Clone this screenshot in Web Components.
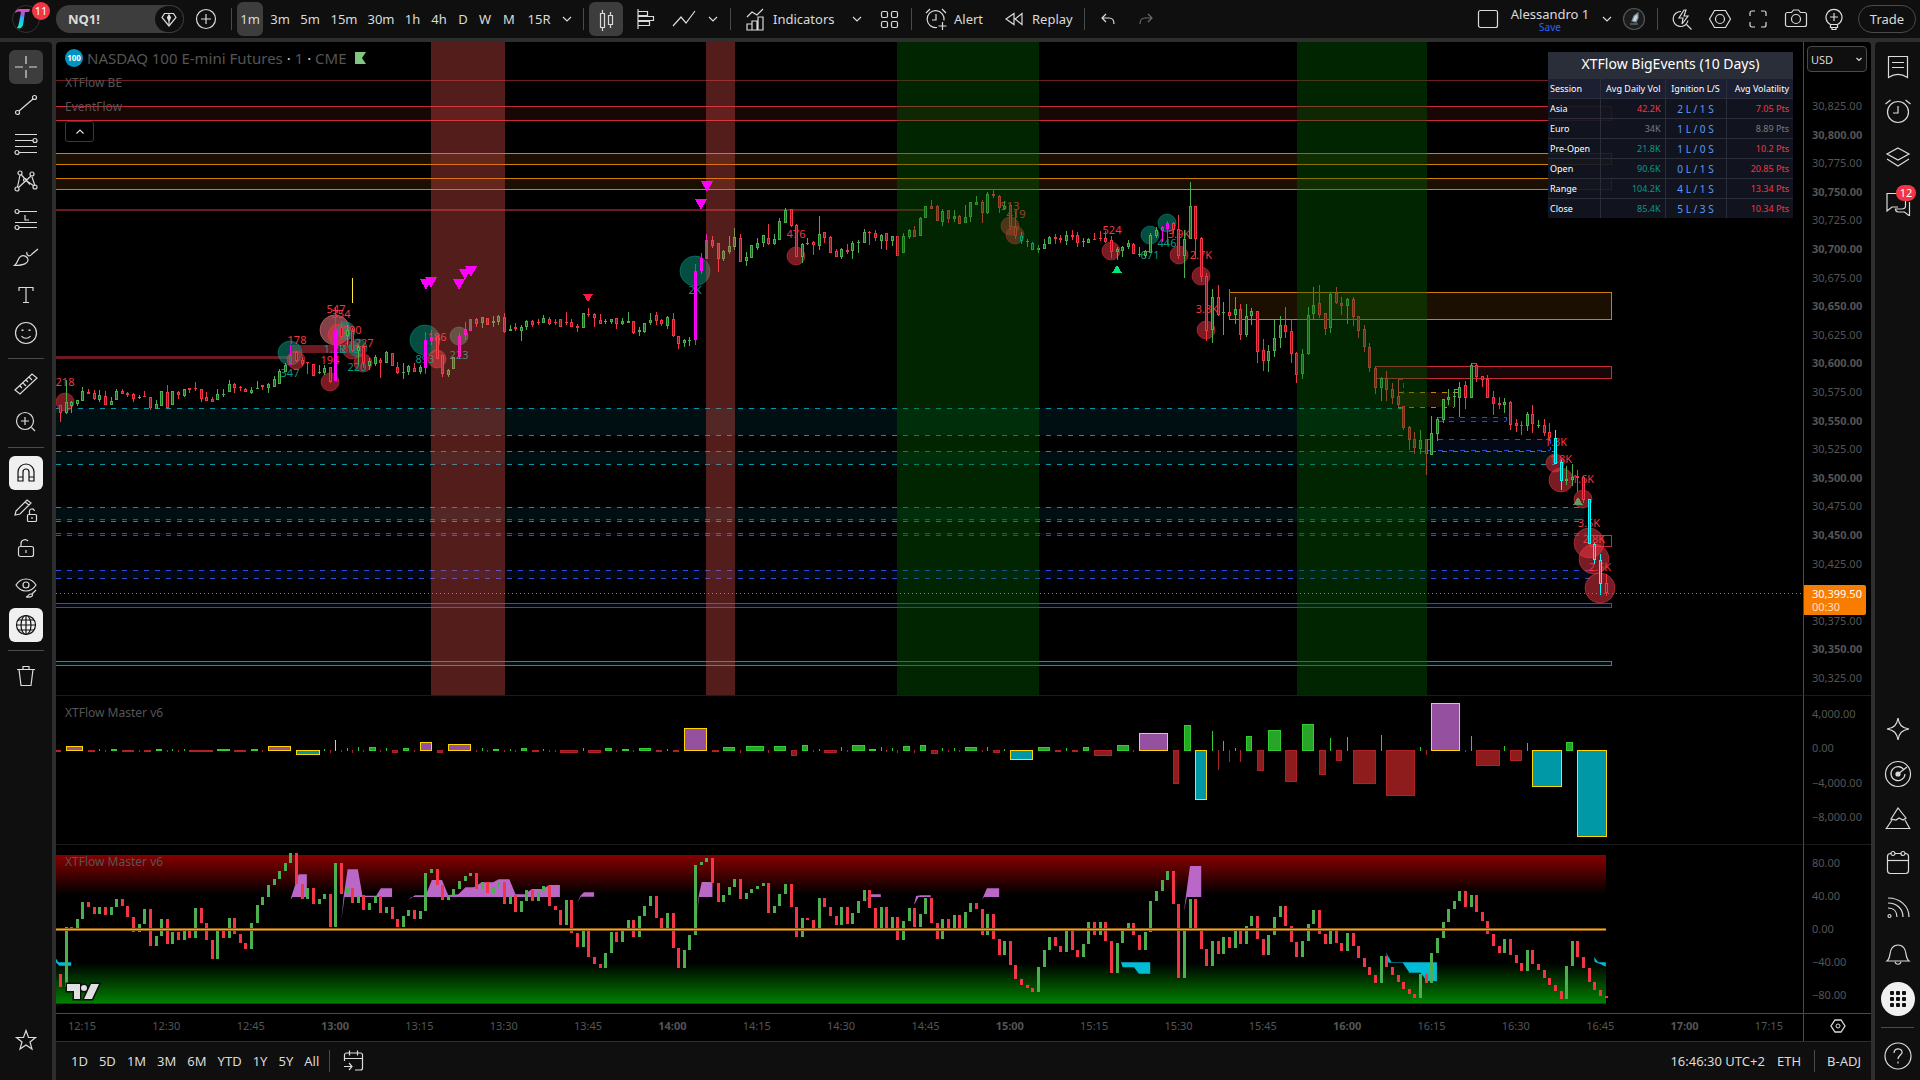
<!DOCTYPE html>
<html lang="en">
<head>
<meta charset="utf-8">
<title>NQ1! chart</title>
<style>
html,body{margin:0;height:100%;background:#2e2e2e;overflow:hidden}
body{font-family:"Noto Sans","Liberation Sans",sans-serif;font-size:13px;line-height:16px;color:#dbdbdb}
</style>
</head>
<body>
<trading-app></trading-app>
<script>
const ICONS={
plus:'<circle cx="14" cy="14" r="9.500"/><path d="M14 9v10M9 14h10"/>',
gem:'<path d="M9.500 8.500h9l2.500 4-7 8.500-7-8.500z"/><path d="M14 10l1.500 2.500L14 16l-1.500-3.500zM14 16v5" fill="currentColor"/>',
chev:'<path d="M10 12l4 4 4-4"/>',
caret:'<path d="M11.500 13l2.500 2.500 2.500-2.500"/>',
candles:'<path d="M8.500 8.500h4v14h-4zM10.500 8V5M10.500 23v3M16.500 10.500h4v9h-4zM18.500 10V7M18.500 20v3"/>',
hbars:'<path d="M7 4v20M7.500 6.500h9v4h-9M7.500 11.500h15v4h-15M7.500 16.500h11v4h-11"/>',
line:'<path d="M3 21l8-9 5 6 9-12"/>',
indic:'<path d="M6 12l5-5 5 3 6-6"/><path d="M6 25v-6h5v6zM11 25v-9h5v9zM17 25V12h5v13z"/>',
grid:'<rect x="6.500" y="6.500" width="6" height="6" rx="1.500"/><rect x="16.500" y="6.500" width="6" height="6" rx="1.500"/><rect x="6.500" y="16.500" width="6" height="6" rx="1.500"/><rect x="16.500" y="16.500" width="6" height="6" rx="1.500"/>',
alert:'<path d="M15 22.500a8.500 8.500 0 1 1 7-7M14 9v6h-4M4 8l4-4M24 8l-4-4M20.500 17v8M16.500 21h8"/>',
replay:'<path d="M14 8.500l-8 5.500 8 5.500zM22 8.500L15 14l7 5.500z"/>',
undo:'<path d="M12 9l-4 4 4 4M8 13h7c3 0 5 2 5 6"/>',
redo:'<path d="M16 9l4 4-4 4M20 13h-7c-3 0-5 2-5 6"/>',
square:'<rect x="4.500" y="5.500" width="19" height="17" rx="2"/>',
boltsearch:'<path d="M13 6.500a7.500 7.500 0 1 0 7 9M18.500 19.500l5 5M16 5l-5 8h4l-1 6 6-8h-4l2-6z"/>',
hex:'<path d="M8.500 5.500h11l5 8.500-5 8.500h-11L3.500 14z"/><circle cx="14" cy="14" r="4.500"/>',
full:'<path d="M6 11V8a2 2 0 0 1 2-2h3M17 6h3a2 2 0 0 1 2 2v3M22 17v3a2 2 0 0 1-2 2h-3M11 22H8a2 2 0 0 1-2-2v-3"/>',
camera:'<path d="M5.500 7.500h4l2-2.500h5l2 2.500h4a2 2 0 0 1 2 2v10a2 2 0 0 1-2 2h-17a2 2 0 0 1-2-2v-10a2 2 0 0 1 2-2z"/><circle cx="14" cy="14" r="4.500"/>',
bulb:'<path d="M10.500 19.500a8 8 0 1 1 7 0zM10.500 19.500v3h7v-3M12 22.500v2h4v-2M14 8v8M10 12h8"/>',
cross:'<path d="M3 14h8M17 14h8M14 3v8M14 17v8"/>',
trend:'<path d="M7 20L21 8"/><circle cx="5.500" cy="21.500" r="2"/><circle cx="22.500" cy="6.500" r="2"/>',
fib:'<path d="M3 5.500h22M3 11.500h18M3 17.500h22M7 23.500h18"/><circle cx="23" cy="11.500" r="2"/><circle cx="5" cy="23.500" r="2"/>',
pattern:'<path d="M5.500 20L8 8M9.500 8l8.500 9.500M6.500 20.500L19 9M20 10l3 9M13.500 13L22 19"/><circle cx="8" cy="6" r="2"/><circle cx="20" cy="7" r="2"/><circle cx="5" cy="22" r="2"/><circle cx="23" cy="20" r="2"/><circle cx="13" cy="13" r="1.500"/>',
position:'<path d="M7 6.500h18M3 17.500h22M7 22.500h18M13 10v5h4"/><circle cx="5" cy="6.500" r="2"/><circle cx="5" cy="22.500" r="2"/>',
brush:'<path d="M2.500 22.500c4-3 3-7 6-9s7 0 7.500 3-3 6-13.500 6zM15 9c-1 4 3 5 5 2l6-5"/>',
text:'<path d="M7 10V6.500h14V10M14 6.500v15M11 21.500h6"/>',
smile:'<circle cx="14" cy="14" r="10.500"/><path d="M9.500 17c2 3 7 3 9 0"/><path d="M10.500 10.500v1.500M17.500 10.500v1.500" stroke-width="2"/>',
ruler:'<path d="M3 20L20 4l5 4L8 24zM8 16l2 2M11 13l3 3M14 10l2 2M17 7l3 3"/>',
zoom:'<circle cx="13" cy="13" r="8.500"/><path d="M13 9v8M9 13h8M19.500 19.500L23 23"/>',
magnet:'<path d="M6 22V13a8 8 0 0 1 16 0v9h-5v-9a3 3 0 0 0-6 0v9zM6 18h5M17 18h5"/>',
pencil:'<path d="M4 14L15 3l4 3L8 17l-5 1zM13 5l4 3"/><rect x="15.500" y="17.500" width="9" height="7" rx="1"/><path d="M17.500 17v-2a2.500 2.500 0 0 1 5-1M20 20v2"/>',
lock:'<rect x="6.500" y="11.500" width="15" height="10" rx="2"/><path d="M9 11V9a4 4 0 0 1 7-3M14 15v3"/>',
eye:'<path d="M4 12c5-8 15-8 20 0-5 8-15 8-20 0z"/><circle cx="14" cy="12" r="3"/><path d="M14 24c3-1 2-3 5-3s2 4-5 3zM20 21l4-4"/>',
globe:'<circle cx="14" cy="14" r="9.500"/><ellipse cx="14" cy="14" rx="5" ry="9.500"/><path d="M4 14h20M14 4.500v19M6 9h16M6 19h16"/>',
trash:'<path d="M5 7.500h18M7 7.500l2 16h10l2-16M11 7V4.500h6V7"/>',
star:'<path d="M14 4.500l2.500 7h7l-5.500 4.500 2 7L14 19l-6 4 2-7-5.500-4.500h7z"/>',
list:'<path d="M4.500 3.500h19v21c-6-4-13-4-19 0zM8 9.500h12M8 14.500h12"/>',
alarm:'<circle cx="14" cy="14" r="10.500"/><path d="M14 8v7H9M1.500 6l5-4M26.500 6l-5-4"/>',
layers:'<path d="M14 5l11 6-11 6-11-6zM3 16l11 7 11-7"/>',
chat:'<path d="M22 10V5.500H3V23l5-4h6M25.500 14v14l-5-4h-6c-2 0-3-1-3-3h6c2 0 4-1 4-3v-5"/>',
spark:'<path d="M14 3c1 7 4 10 11 11-7 1-10 4-11 11-1-7-4-10-11-11 7-1 10-4 11-11z"/>',
radar:'<circle cx="14" cy="14" r="12.500"/><path d="M20 10a7 7 0 1 0 1 4"/><circle cx="14" cy="14" r="2" fill="currentColor"/><path d="M14 14l9-7"/>',
mount:'<path d="M7 14l7-11 8 10-3 2-4-2-3 2zM2 24l6-9M26 24l-5-9M1.500 23.500h25"/>',
cal:'<rect x="3.500" y="3.500" width="21" height="20" rx="3"/><path d="M3.500 10.500h21"/><circle cx="9" cy="3.500" r="2" fill="#0f0f0f"/><circle cx="19" cy="3.500" r="2" fill="#0f0f0f"/>',
rss:'<path d="M4 3c12 0 21 8 21 19M4 8c9 0 15 6 15 14M4 13c6 0 9 4 9 9"/><circle cx="5.500" cy="21" r="1.500"/>',
bell:'<path d="M3 21c4-3 2-9 5-13 3-4 9-4 12 0 3 4 1 10 5 13zM11 22c1 3 5 3 6 0"/>',
dots:'<g fill="#0f0f0f" stroke="none"><rect x="6" y="6" width="4" height="4" rx="1"/><rect x="12" y="6" width="4" height="4" rx="1"/><rect x="18" y="6" width="4" height="4" rx="1"/><rect x="6" y="12" width="4" height="4" rx="1"/><rect x="12" y="12" width="4" height="4" rx="1"/><rect x="18" y="12" width="4" height="4" rx="1"/><rect x="6" y="18" width="4" height="4" rx="1"/><rect x="12" y="18" width="4" height="4" rx="1"/><rect x="18" y="18" width="4" height="4" rx="1"/></g>',
help:'<circle cx="14" cy="14" r="13"/><path d="M10 11c0-6 9-5 8 0-1 2-4 3-4 6M14 19.500v2"/>',
goto:'<path d="M5.500 14V8a2 2 0 0 1 2-2h14a2 2 0 0 1 2 2v13a2 2 0 0 1-2 2H16M5.500 11.500h18M10.500 3.500v5M18.500 3.500v5M5 19.500h8M10 16l3 3.500-3 3.500"/>',
flask:'<circle cx="14" cy="14" r="10.500" stroke="#555" fill="#1c1c1c"/><path d="M12 16l2-5 4-3v5l-2 4zM10 19h8" stroke="#6f8a98" fill="#c7d6de"/>',
up:'<path d="M10.500 15.500L14 12l3.500 3.500"/>'
};
class TvIcon extends HTMLElement{
  connectedCallback(){
    this.attachShadow({mode:'open'}).innerHTML=`<style>:host{display:block;width:28px;height:28px;flex:none}svg{display:block;fill:none;stroke:currentColor;stroke-width:1.2}</style><svg width="28" height="28" viewBox="0 0 28 28" aria-hidden="true">${ICONS[this.getAttribute('name')]||''}</svg>`;
  }
}
customElements.define('tv-icon',TvIcon);

class TvDivider extends HTMLElement{
  connectedCallback(){
    this.attachShadow({mode:'open'}).innerHTML='<style>:host{display:block;flex:none;width:11px;height:22px;background:linear-gradient(#4a4a4a,#4a4a4a) 5px 0/1px 100% no-repeat}</style>';
  }
}
customElements.define('tv-divider',TvDivider);

class TopBar extends HTMLElement{
  connectedCallback(){
    const iv=[['3m',30],['5m',30],['15m',38],['30m',36],['1h',27],['4h',26],['D',22],['W',22],['M',26],['15R',34]];
    this.attachShadow({mode:'open'}).innerHTML=`<style>
:host{display:flex;align-items:center;height:38px;background:#0f0f0f;padding-right:4px;box-sizing:border-box;font-size:13px}
button{font:inherit;color:inherit;background:none;border:0;padding:0;height:34px;display:flex;align-items:center;justify-content:center;flex:none;border-radius:6px;white-space:nowrap}
.on{background:#3d3d3d}
.logo{width:56px;position:relative}
.logo svg{display:block;margin-right:4px}
.badge{position:absolute;left:32px;top:0;width:18px;height:18px;border-radius:9px;background:#f23645;color:#fff;font-size:11px;line-height:18px;text-align:center}
.sym{width:128px;height:28px;border-radius:14px;background:#3d3d3d;justify-content:space-between;padding:0 1px 0 12px;font-weight:700;margin-right:2px}
.sym span{display:flex;align-items:center;width:28px;height:26px;border-radius:13px;background:#0f0f0f}
.lab{justify-content:flex-start;gap:4px;padding-left:5px}
.dim{color:#6a6a6a}
.right{margin-left:auto;display:flex;align-items:center}
.name{flex-direction:column;width:96px}
.name b{font-weight:400;line-height:16px}
.name small{font-size:10px;line-height:10px;color:#2962ff}
.trade{width:58px;height:28px;border:1px solid #4a4a4a;border-radius:14px;margin-left:5px}
</style>
<button class="logo" aria-label="Menu"><svg width="28" height="28" viewBox="0 0 28 28"><defs><linearGradient id="g" x1="0" y1="0" x2="0" y2="1"><stop offset="0" stop-color="#ff3fb4"/><stop offset=".3" stop-color="#7a6cf0"/><stop offset=".55" stop-color="#12c8f0"/><stop offset="1" stop-color="#27e0c8"/></linearGradient></defs><circle cx="14" cy="14" r="13.500" fill="none" stroke="#333"/><path d="M3 8c1-3 2-4 5-4h10l-1 3h-4l-2 13c-1 3-3 4-6 3 2-3 2-6 4-16-3-1-4 0-6 1z" fill="url(#g)"/></svg><span class="badge">11</span></button>
<button class="sym">NQ1!<span><tv-icon name="gem"></tv-icon></span></button>
<button style="width:40px" aria-label="Compare"><tv-icon name="plus"></tv-icon></button>
<tv-divider></tv-divider>
<button class="on" style="width:26px;margin-right:2px">1m</button>
${iv.map(([t,w])=>`<button style="width:${w}px">${t}</button>`).join('')}
<button style="width:22px" aria-label="Intervals"><tv-icon name="chev"></tv-icon></button>
<tv-divider></tv-divider>
<button class="on" style="width:34px" aria-label="Candles"><tv-icon name="candles"></tv-icon></button>
<button style="width:44px" aria-label="Profile"><tv-icon name="hbars"></tv-icon></button>
<button style="width:34px" aria-label="Line"><tv-icon name="line"></tv-icon></button>
<button style="width:24px" aria-label="Styles"><tv-icon name="chev"></tv-icon></button>
<tv-divider></tv-divider>
<button class="lab" style="width:106px"><tv-icon name="indic"></tv-icon>Indicators</button>
<button style="width:30px" aria-label="Favorites"><tv-icon name="chev"></tv-icon></button>
<button style="width:34px" aria-label="Layouts"><tv-icon name="grid"></tv-icon></button>
<tv-divider></tv-divider>
<button class="lab" style="width:78px"><tv-icon name="alert"></tv-icon>Alert</button>
<button class="lab" style="width:84px"><tv-icon name="replay"></tv-icon>Replay</button>
<tv-divider></tv-divider>
<button style="width:36px" aria-label="Undo"><tv-icon name="undo"></tv-icon></button>
<button class="dim" style="width:40px" aria-label="Redo"><tv-icon name="redo"></tv-icon></button>
<div class="right">
<button style="width:28px" aria-label="Layout"><tv-icon name="square"></tv-icon></button>
<button class="name"><b>Alessandro 1</b><small>Save</small></button>
<button style="width:18px" aria-label="Manage layouts"><tv-icon name="chev"></tv-icon></button>
<button style="width:36px" aria-label="Profile picture"><tv-icon name="flask"></tv-icon></button>
<tv-divider></tv-divider>
${['boltsearch','hex','full','camera','bulb'].map(n=>`<button style="width:38px" aria-label="${n}"><tv-icon name="${n}"></tv-icon></button>`).join('')}
<button class="trade">Trade</button>
</div>`;
  }
}
customElements.define('top-bar',TopBar);

class DrawBar extends HTMLElement{
  connectedCallback(){
    const b=(n,c='')=>`<button class="${c}" aria-label="${n}"><tv-icon name="${n}"></tv-icon></button>`;
    this.attachShadow({mode:'open'}).innerHTML=`<style>
:host{display:flex;flex-direction:column;align-items:center;gap:4px;width:52px;background:#0f0f0f;padding:8px 0 23px;box-sizing:border-box;border-radius:0 4px 0 0}
button{width:34px;height:34px;padding:3px;border:0;border-radius:6px;background:none;color:#dbdbdb;flex:none}
.on{background:#3d3d3d}.inv{background:#f0f0f0;color:#0f0f0f}
hr{width:36px;height:1px;border:0;margin:4px 0 4px;background:#4a4a4a;flex:none}
.last{margin-top:auto}
</style>${b('cross','on')}${['trend','fib','pattern','position','brush','text','smile'].map(n=>b(n)).join('')}<hr>${b('ruler')}${b('zoom')}<hr>${b('magnet','inv')}${b('pencil')}${b('lock')}${b('eye')}${b('globe','inv')}<hr>${b('trash')}${b('star','last')}`;
  }
}
customElements.define('draw-bar',DrawBar);

class SideBar extends HTMLElement{
  connectedCallback(){
    const b=(n,c='',x='')=>`<button class="${c}" aria-label="${n}"><tv-icon name="${n}"></tv-icon>${x}</button>`;
    this.attachShadow({mode:'open'}).innerHTML=`<style>
:host{display:flex;flex-direction:column;align-items:center;width:45px;background:#0f0f0f;padding:2px 0;box-sizing:border-box;border-radius:4px 0 0 0}
button{width:45px;height:45px;padding:0;border:0;background:none;color:#dbdbdb;flex:none;display:flex;align-items:center;justify-content:center;position:relative}
.badge{position:absolute;left:21px;top:6px;width:20px;height:16px;border-radius:8px;background:#f23645;color:#fff;font:11px/16px "Noto Sans",sans-serif}
.sp{margin-top:auto}
.inv tv-icon{background:#f0f0f0;border-radius:50%;padding:3px}
hr{width:33px;height:1px;border:0;background:#4a4a4a;margin:6px 0 5px;flex:none}
</style>${b('list')}${b('alarm')}${b('layers')}${b('chat','','<span class="badge">12</span>')}${b('spark','sp')}${['radar','mount','cal','rss','bell'].map(n=>b(n)).join('')}${b('dots','inv')}<hr>${b('help')}`;
  }
}
customElements.define('side-bar',SideBar);

/* Shared time scale: one bar per minute from 12:11 */
const X=i=>Math.round(4+5.62*i);
const rect=(x,y,w,h,f,e='')=>`<rect x="${x}" y="${y}" width="${w}" height="${h}" fill="${f}" ${e}/>`;
const COL={r:'#f23645',g:'#4caf50',m:'#ff00ff',c:'#00ffff',t:'#00c8b4'};
const DIM={r:'#8c1d28',g:'#1c6a24',m:'#4a6a5c',c:'#b03a4a',t:'#00443c'};

/* Each candle: colour, high, body top, body bottom, low (thirds of a pixel from the block's base) */
const CANDLES=[[188,0,`r525,525,548,575 g450,516,548,552 g512,516,528,548 g510,510,522,528 g471,484,512,512 r477,486,492,492 r480,489,507,510 g480,495,510,516 r484,498,524,524 g501,513,524,524 g477,483,509,509 r477,483,492,492 r486,488,494,502 r490,492,507,515 g495,500,502,508 r483,498,500,500 r501,501,534,540 g510,522,536,538 g484,484,527,527 r465,486,533,533 g483,484,524,524 r483,486,494,507 g477,478,498,501 r475,474,479,490 r456,474,477,483 r477,478,508,515 r486,501,513,513 r500,507,515,515 g477,492,509,509 g477,493,496,502 g450,462,487,487 r459,463,474,488 r468,472,475,482 r474,477,486,486 g471,480,488,491 g453,473,475,478 r465,465,472,479 g460,462,475,488 g438,447,470,470 g417,423,462,462 g400,405,427,427 m345,375,402,405 r363,366,392,396 r380,390,402,408 r395,396,400,432 r402,402,437,437 g405,425,428,432 g405,414,428,434 r411,411,456,459 m230,300,452,452 r272,290,322,330 g285,300,318,345 r295,303,362,366 g345,350,362,402 r345,350,400,415 g384,393,408,420 g375,381,403,408 r384,390,400,444 g363,366,398,398 r369,370,409,409 r395,411,430,432 g399,426,429,446 g405,408,426,435 r400,414,425,425 g405,412,426,432 m306,330,414,432 m300,322,334,345 r315,318,386,386 r375,376,432,440 g417,420,434,440 g381,381,418,418 m309,318,381,384 m276,297,316,330 m267,267,302,302 r264,267,282,290 g262,262,279,294 r264,265,285,285 g258,272,280,290 g255,259,276,284 r249,261,305,308 g285,298,304,304 r279,291,298,302 g285,290,302,333 g270,274,290,300 r270,273,284,292 r267,275,278,284 g255,265,278,278 r260,268,282,285 r267,275,278,284 r267,267,290,290 r246,275,280,285 r266,275,290,290 r282,289,294,306 g249,249,293,293 r234,251,254,262`],
[118,95,`r459,462,475,501 r462,480,491,491 g477,482,486,492 g477,477,486,491 r474,474,491,507 g474,483,492,495 g456,483,488,488 r483,484,519,522 g501,509,516,528 g489,489,516,519 g459,480,490,496 r456,466,484,495 r477,480,493,498 g468,472,498,507 r459,477,528,531 r528,529,552,567 g537,541,548,560 g531,540,543,558 m312,333,540,555 m279,295,334,342 m222,240,296,296 r228,240,258,264 r249,249,296,336 g270,273,296,302 g228,258,276,282 g204,231,261,270 r222,234,305,305 g276,291,304,318 g255,255,293,293 g234,249,263,270 g225,226,248,262 r192,234,251,255 g222,237,251,255 g174,183,239,239 g144,150,188,188 r147,148,198,201 r192,195,290,290 g249,252,291,308 g234,250,253,255 r243,245,256,285 g168,222,257,270 r216,217,234,249 r228,231,278,278 r267,273,290,290 g264,267,290,297 r252,269,275,282 g243,249,272,297 g240,245,249,279 g207,216,249,249 r213,216,219,255 r210,219,234,243 g222,225,242,266 r219,220,242,270 g228,229,242,258 r228,228,288,288 g219,228,278,278 g207,210,230,237 r198,210,230,230 g171,174,229,229 g138,139,173,173 r120,138,146,146 r135,139,182,182 g147,153,185,198 r150,150,176,188 g150,168,177,186 r165,168,191,191 g135,171,189,189 g126,126,171,186 g108,126,134,134 r120,127,158,189 g96,102,159,162 r88,102,107,114 r105,108,143,160 g123,137,146,150 r132,134,200,210 r156,200,227,236 t216,228,242,252 t237,243,247,262 t246,248,270,270 g255,265,271,279 g237,252,266,266 g228,231,252,252 r222,231,236,252 r225,234,240,249 g213,225,242,255 r210,224,230,240 r216,225,248,260 g234,243,246,261 g234,237,248,248 r219,236,240,240 r213,233,237,243`],
[128,186,`r183,204,215,220 r198,210,245,264 g231,237,246,270 g228,231,242,262 g210,219,231,237 r219,222,252,252 g231,252,255,262 g240,243,258,264 g189,195,249,249 g171,181,198,204 m168,171,184,216 m153,159,176,225 r156,158,181,192 r135,178,258,266 g180,207,257,324 g36,109,206,206 r108,109,206,264 r200,205,320,335 r309,318,482,512 g357,381,480,519 r345,381,434,438 g396,426,430,495 r357,426,437,447 g381,417,434,462 r402,417,494,510 g402,438,494,501 g414,423,438,465 r423,424,545,579 r507,540,572,602 g525,543,572,605 g447,504,542,560 g438,465,503,533 r411,465,485,503 r447,483,551,579 r546,549,614,639 g537,552,612,627 g411,435,551,555 g351,405,431,447 r345,399,434,443 r430,430,476,495 g366,372,474,489 r351,369,399,402 r381,399,407,435 g384,387,407,462 r381,387,441,468 r438,439,482,503 r465,477,530,546 r519,531,593,606 r588,594,653,672 g621,624,653,693 r603,625,659,693 r639,657,683,702 r627,679,705,711 r708,709,774,780 r768,771,809,840 r786,807,833,852 g780,810,836,852 r807,808,851,915 g738,789,854,854 g741,747,792,813 g687,688,749,759 g657,681,690,705 g657,679,682,711 g636,651,683,741 r633,645,683,717 g579,585,683,683 r582,585,621,636 r618,619,629,651 r615,627,683,683 r663,681,701,735 r681,700,706,717 g684,697,704,728 r693,696,765,780 r747,760,767,786 r753,765,768,795 g726,732,767,783 r705,732,762,789 g750,765,768,774 r747,765,789,798 r759,786,803,813 c780,804,881,881 c870,877,932,960 g888,928,932,945 g882,920,930,948 r900,918,923,966 r918,920,990,1000 c987,988,1123,1123 c1119,1122,1171,1182 c1152,1171,1243,1275 r1212,1240,1270,1278`]];

class PricePlot extends HTMLElement{
  connectedCallback(){
    let s='';
    const end=1556;
    const R='#c92a36',O='#d08000',B='#2650d0',C='#0098ac';
    const line=(x1,x2,y,c,d='')=>`<path d="M${x1} ${y+.5}H${x2}" stroke="${c}" fill="none" ${d?`stroke-dasharray="${d}"`:''}/>`;
    const box=(x1,y1,x2,y2,c,f)=>`<rect x="${x1+.5}" y="${y1+.5}" width="${x2-x1-1}" height="${y2-y1}" fill="${f}" stroke="${c}"/>`;
    const band=(x1,y1,x2,y2,c,f)=>rect(x1,y1,x2-x1,y2-y1,f)+line(x1,x2,y1,c,'5 6')+line(x1,x2,y2,c,'5 6');
    const fr='rgba(242,54,69,.1)',fo='rgba(255,152,0,.1)',fc='rgba(0,188,212,.08)',fb='rgba(41,98,255,.08)';
    s+=line(0,end,38,'#701c24');
    s+=box(-5,64,end,78,R,fr)+box(-5,111,end,122,O,fo)+box(-5,136,end,147,O,fo);
    s+=rect(0,167,870,2,'#6a1a20')+rect(0,314,234,3,'#6a1a20')+rect(234,303,58,8,'#6a1a20');
    s+=band(0,366,1347,393,C,fc)+band(0,409,1499,422,C,fc)+band(0,465,1528,479,C,fc);
    s+=band(0,477,1528,479,B,'none')+band(0,491,1530,493,B,fb)+band(0,528,1538,536,B,fb);
    s+=line(0,1528,479,C,'5 6');
    s+=box(-5,561,end,565,B,fb)+box(-5,619,end,623,C,fc);
    s+=box(1173,250,end,277,O,fo)+box(1319,324,end,336,R,fr)+box(1534,493,end,504,R,'none');
    s+=rect(1342,350,56,15,fo)+line(1342,1410,350,O,'5 6')+line(1342,1398,365,O,'5 6');
    s+=band(1382,375,1450,379,B,fb)+band(1371,397,1494,408,B,fb);
    s+=`<path d="M1398.500 352V365" stroke="${O}" stroke-dasharray="5 3" fill="none"/><path d="M1398 347.500h6" stroke="${O}"/><path d="M1342 337.500h5V352M1450.500 375v4M1494.500 397v11" stroke="${B}" stroke-dasharray="5 3" fill="none"/>`;
    s+=line(1415,1421,321,C);
    const rc='rgba(242,54,69,.5)',tc='rgba(8,153,129,.5)';
    const circ=[[9,360,9,rc],[234,311,12,tc],[240,318,9,rc],[279,288,15,'rgba(225,110,120,.58)'],[283,293,11,rc],[290,289,9,tc],[296,308,9,rc],[302,306,9,tc],[307,321,9,rc],[274,340,9,rc],[369,298,15,tc],[381,317,9,rc],[403,294,9,'rgba(60,130,110,.6)'],[639,229,15,tc],[740,214,9,rc],[954,184,9,rc],[959,193,9,rc],[1055,209,9,rc],[1094,193,9,tc],[1111,181,9,tc],[1123,213,9,rc],[1145,234,9,rc],[1150,288,9,rc],[1499,421,9,rc],[1505,438,12,rc],[1527,457,9,rc],[1533,501,15,rc],[1538,517,15,rc],[1544,546,15,rc]];
    for(const [x,y,r,c] of circ)s+=`<circle cx="${x}" cy="${y}" r="${r}" fill="${c}" stroke="${c}" shape-rendering="auto"/>`;
    const lab=[['218',9,340,0],['178',241,298,0],['347',234,331,1],['547',280,267,0],['354',285,272,0],['290',296,288,0],['227',308,301,0],['194',274,318,0],['220',301,325,1],['1.2K',279,307,1],['218',294,307,1],['893',369,317,1],['186',381,295,0],['223',403,313,1],['2K',639,248,1],['476',740,192,0],['513',954,164,0],['419',960,172,0],['524',1056,188,0],['671',1094,213,1],['446',1111,201,1],['3.9K',1123,192,0],['2.7K',1145,213,0],['3.3K',1151,267,0],['1.3K',1500,400,0],['1.8K',1505,417,0],['1.6K',1527,437,0],['3.5K',1533,481,0],['2.8K',1538,497,0],['2.5K',1544,525,0]];
    for(const [t,x,y,k] of lab)s+=`<text x="${x}" y="${y+4}" text-anchor="middle" fill="${k?'#089981':'#f23645'}">${t}</text>`;
    for(const [base,start,data] of CANDLES){
      data.split(' ').forEach((d,k)=>{
        const c=d[0],v=d.slice(1).split(',').map(n=>Math.round(base+n/3)),x=X(start+k);
        const h=Math.max(1,v[2]-v[1]);
        s+=rect(x,v[0],1,Math.max(1,v[3]-v[0]),COL[c])+rect(x-1,v[1],3,h,COL[c]);
        if(h>2)s+=rect(x,v[1]+1,1,h-2,DIM[c]);
      });
    }
    s+=rect(296,236,1,25,'#ffeb3b');
    const red='rgba(247,88,80,.333)',grn='rgba(0,100,0,.37)';
    s+=rect(375,0,74,'100%',red)+rect(650,0,29,'100%',red)+rect(841,0,142,'100%',grn)+rect(1241,0,130,'100%',grn);
    const tri=(x,y,w,h,c)=>`<path d="M${x-w} ${y}h${2*w}l${-w} ${h}z" fill="${c}"/>`;
    for(const [x,y] of [[370,237],[375,235],[403,237],[409,227],[415,224],[651,139],[645,157]])s+=tri(x,y,6,11,'#ff00ff');
    s+=tri(532,252,5,8,'#ff1744')+tri(1061,231,5,-8,'#00e676')+tri(1522,463,5,-8,'rgba(90,210,120,.7)');
    s+=`<path d="M0 551.500H4000" stroke="#d8731a" stroke-dasharray="1 3"/>`;
    this.attachShadow({mode:'open'}).innerHTML=`<style>:host{display:block;overflow:hidden;min-width:0;position:relative}svg{display:block;position:absolute;inset:0;width:100%;height:100%;font-size:11px}</style><svg shape-rendering="crispEdges">${s}</svg><slot></slot>`;
  }
}
customElements.define('price-plot',PricePlot);

/* kind, first bar, last bar, height above zero (thirds of a pixel) */
const FLOW=`R-1,0,-1 P1,4,13 R5,6,-1 G7,7,4 R8,8,-1 G9,10,4 R11,13,-1 R14,14,-1 R15,16,-4 G17,18,4 R19,19,-1 G20,20,4 R21,21,-1 G22,22,4 R23,27,-4 G28,30,4 R31,33,-1 G34,35,4 R36,36,-1 P37,41,13 C42,46,-13 G47,47,4 R48,48,-5 Y49,49,29 R50,50,-4 G51,51,7 R52,52,-7 G53,53,10 R54,54,-4 G55,56,10 R57,57,-1 G58,58,7 R59,60,-7 G61,62,7 R63,63,-1 P64,66,24 R67,68,-7 P69,73,18 R74,74,-1 G75,75,7 R76,76,-1 G77,78,4 R79,79,-1 G80,80,4 R81,81,-2 G82,83,7 R84,85,-2 G86,86,4 R87,87,-1 R88,88,-2 R89,92,-7 G93,93,7 R94,96,-7 G97,98,7 R99,99,-1 G100,101,4 R102,102,-1 G103,105,7 R106,107,-1 G108,108,4 R109,110,-4 P111,115,66 R116,117,-4 G118,120,10 R121,121,-7 G122,125,13 R126,126,-7 G127,129,13 R130,131,-16 G132,133,16 R134,134,-1 G135,135,4 R136,138,-7 G139,139,10 R140,140,-1 G141,143,16 G144,145,2 G146,146,10 R147,147,-1 G148,148,7 R149,149,-7 G150,151,13 R152,152,-7 G153,154,16 R155,156,-10 G157,157,7 R158,158,-1 G159,159,5 R160,160,-4 G161,163,10 R164,164,-1 G165,165,10 R166,167,-7 G168,168,4 C169,173,-28 G174,176,10 R177,178,-1 G179,179,7 R180,181,-4 G182,183,10 R184,187,-16 G188,190,16 R191,191,-4 P192,197,52 R198,199,-100 G200,201,76 C202,204,-148 G205,205,58 R206,206,-58 G207,207,26 R208,208,-34 G209,209,7 R210,210,-34 G211,212,43 R213,214,-61 G215,217,61 R218,220,-94 G221,223,79 R224,225,-73 G226,226,37 R227,228,-31 G229,229,40 R230,234,-100 G235,235,46 R236,241,-136 G242,242,10 R243,243,-13 P244,249,142 R250,250,-4 G251,251,43 R252,256,-46 G257,257,13 R258,260,-31 G261,261,22 C262,267,-109 G268,269,25 C270,275,-259`;
class FlowPlot extends HTMLElement{
  connectedCallback(){
    const st={R:['#b22222','#8e1c1c'],G:['#32cd32','#28a428'],P:['#ffd600','#9650a0'],C:['#ffd600','#0097a7'],Y:['#ffd600','#ffd600']};
    let s='';
    for(const t of FLOW.split(' ')){
      const [a,b,h]=t.slice(1).split(',').map(Number),[k,f]=st[t[0]];
      const x=X(a),w=X(b)-x+1,hh=Math.max(1,Math.round(Math.abs(h)/3)),y=h>0?54-hh:54;
      s+=rect(x,y,w,hh+1,k);
      if(w>2&&hh>1)s+=rect(x+1,y+1,w-2,hh-1,f);
    }
    this.attachShadow({mode:'open'}).innerHTML=`<style>:host{display:block;overflow:hidden;min-width:0;position:relative}svg{display:block;position:absolute;inset:0;width:100%;height:100%}</style><svg shape-rendering="crispEdges">${s}</svg><slot></slot>`;
  }
}
customElements.define('flow-plot',FlowPlot);

/* Closing level of each oscillator bar; a bar spans from the level before it */
const OSC=[882,921,741,745,717,666,682,702,681,705,681,657,679,711,756,732,687,798,768,717,792,756,780,748,774,684,729,780,837,753,774,714,762,789,807,729,675,651,615,597,573,549,519,612,657,624,672,657,642,741,549,642,624,669,645,690,669,648,699,681,717,741,708,690,717,693,579,567,615,660,645,627,603,588,579,627,606,639,621,606,672,645,696,663,630,663,636,618,678,690,735,660,759,801,748,831,852,864,819,756,786,748,720,771,708,678,648,714,744,699,804,864,810,765,555,546,534,609,666,645,621,597,657,639,627,618,609,699,678,642,612,681,771,714,720,750,654,681,708,735,681,732,699,663,630,684,745,681,744,711,780,723,684,741,702,654,729,777,717,747,705,744,696,669,687,765,702,777,825,783,855,897,915,924,936,861,810,771,798,816,750,810,831,792,726,765,726,783,879,789,753,729,765,810,756,663,633,600,573,672,894,748,657,750,807,858,783,822,771,804,753,792,738,708,777,825,765,711,678,738,786,831,783,732,690,762,792,753,789,813,759,798,834,861,885,909,828,861,885,906,927,942,954,882,909,819,774,726,687,663,633,681,645,696,723,762,798,819,777,825,849,873,810,852,870,894,915,933,957,858,783,831,864,906,930,948,954];
class OscPlot extends HTMLElement{
  connectedCallback(){
    let s='<defs><linearGradient id="r" x1="0" y1="0" x2="0" y2="1"><stop offset="0" stop-color="#860000"/><stop offset="1" stop-color="#000"/></linearGradient><linearGradient id="g" x1="0" y1="0" x2="0" y2="1"><stop offset="0" stop-color="#000"/><stop offset="1" stop-color="#008200"/></linearGradient></defs>';
    s+=rect(0,10,1550,40,'url(#r)')+rect(0,118,1550,41,'url(#g)')+rect(0,158,1550,1,'#005000');
    const poly=(d,c)=>`<path shape-rendering="auto" d="${d}" fill="${c}"/>`,P='#ba68c8',C='#00bcd4';
    s+='<g transform="translate(-16 -165) scale(.5102 .3333)">'
      +poly('M491 660L493 648 507 583H523V651H495zM591 717L595 650 603 568H623L632 647H659L668 625H690V651H597zM722 660L735 646H756L768 600H788L800 645 820 643 834 622H850L866 607H888L899 598H920L932 643H950L964 627H985L998 615H1019V651H728zM1053 670L1059 648 1066 637H1086V650H1060zM1287 710L1291 648 1297 606H1318V651H1292z',P)
      +poly('M31 835L36 847H61V857H38L31 847z',C)+'</g>';
    s+='<g transform="translate(784 -165) scale(.5102 .3333)">'
      +poly('M47 672L58 643H80V651H56zM145 675L149 648 158 646H178V651H154zM278 660L288 625H312V651H282zM674 695L678 648 686 558H708V651H680z',P)
      +poly('M547 830L551 847H608V881H586L576 862H554zM1070 817L1081 847H1170V903H1150L1138 878H1116L1103 848H1075zM1478 831L1486 847H1501V860L1490 852 1479 846z',C)+'</g>';
    for(let i=1;i<OSC.length;i++){
      const a=OSC[i-1],b=OSC[i],y1=Math.round(Math.min(a,b)/3-165),y2=Math.round(Math.max(a,b)/3-165);
      s+=rect(X(i-1)-1,y1,3,Math.max(2,y2-y1),b<a?'#4caf50':'#f23645');
    }
    s+=rect(0,83,1550,3,'#8a5a10')+rect(0,84,1550,1,'#e0ae35');
    this.attachShadow({mode:'open'}).innerHTML=`<style>:host{display:block;overflow:hidden;min-width:0;position:relative}svg{display:block;position:absolute;inset:0;width:100%;height:100%}</style><svg shape-rendering="crispEdges">${s}</svg><slot></slot>`;
  }
}
customElements.define('osc-plot',OscPlot);

class SessionTable extends HTMLElement{
  connectedCallback(){
    const rows=[['Asia','42.2K','r','2 L / 1 S','7.05 Pts','r'],['Euro','34K','n','1 L / 0 S','8.89 Pts','n'],['Pre-Open','21.8K','g','1 L / 0 S','10.2 Pts','r'],['Open','90.6K','g','0 L / 1 S','20.85 Pts','r'],['Range','104.2K','g','4 L / 1 S','13.34 Pts','r'],['Close','85.4K','g','5 L / 3 S','10.34 Pts','r']];
    this.attachShadow({mode:'open'}).innerHTML=`<style>
:host{display:block;width:245px}
table{border-collapse:collapse;table-layout:fixed;width:100%;font-size:9px;line-height:12px;color:#fff}
caption{background:#2a2e39;font-size:14px;line-height:18px;padding:3px 0 5px}
th,td{height:19px;padding:0 4px;font-weight:400;text-align:right;border:solid #2a2e39;border-width:1px 0 0 1px;background:rgba(19,22,34,.9);white-space:nowrap}
thead th{background:#1c1f31;color:#fff}
th:first-child{text-align:left;padding:0 2px;border-left:0}
td:nth-child(3),thead th:nth-child(3){text-align:center;padding:0}
.b{color:#5b9cf6;font-size:10px}.r{color:#f23645}.g{color:#089981}.n{color:#787b86}
</style><table><caption>XTFlow BigEvents (10 Days)</caption><colgroup><col style="width:52px"><col style="width:65px"><col style="width:61px"><col></colgroup><thead><tr><th scope="col">Session</th><th scope="col">Avg Daily Vol</th><th scope="col">Ignition L/S</th><th scope="col">Avg Volatility</th></tr></thead><tbody>${rows.map(r=>`<tr><th scope="row">${r[0]}</th><td class="${r[2]}">${r[1]}</td><td class="b">${r[3]}</td><td class="${r[5]}">${r[4]}</td></tr>`).join('')}</tbody></table>`;
  }
}
customElements.define('session-table',SessionTable);

class ScaleColumn extends HTMLElement{
  connectedCallback(){
    const l=this.getAttribute('labels').split(' ');
    this.attachShadow({mode:'open'}).innerHTML=`<style>
:host{display:flex;flex-direction:column;justify-content:space-between;border-left:1px solid #4a4a4a;box-sizing:border-box;padding-left:8px;color:#555;font-size:11px;line-height:12px;position:relative}
span{height:12px}b{height:12px}
</style>${l.map(t=>t==='-'?'<span></span>':t[0]==='*'?`<b>${t.slice(1)}</b>`:`<span>${t.replace(/^-/,'−')}</span>`).join('')}<slot></slot>`;
  }
}
customElements.define('scale-column',ScaleColumn);

class TimeAxis extends HTMLElement{
  connectedCallback(){
    let s='';
    for(let k=0;k<21;k++){
      const m=12*60+15+15*k,t=Math.floor(m/60)+':'+String(m%60).padStart(2,'0');
      s+=m%60?`<span>${t}</span>`:`<b>${t}</b>`;
    }
    this.attachShadow({mode:'open'}).innerHTML=`<style>:host{display:flex;justify-content:space-between;align-items:center;padding:0 14px 3px 6px;box-sizing:border-box;color:#555;font-size:11px;border-top:1px solid #4a4a4a;min-width:0}span,b{width:40px;text-align:center}</style>${s}`;
  }
}
customElements.define('time-axis',TimeAxis);

class ChartArea extends HTMLElement{
  connectedCallback(){
    const p=[];
    for(let v=30825;v>=30325;v-=25)p.push(v===30400?'-':(v%50?'':'*')+v.toLocaleString('en-US')+'.00');
    this.attachShadow({mode:'open'}).innerHTML=`<style>
:host{display:grid;grid-template:minmax(0,1fr) 149px 168px 28px / minmax(0,1fr) 68px;background:#000;min-width:0;min-height:0;border-radius:4px 4px 0 0;overflow:hidden}
.p{border-bottom:1px solid #1c1c1c}
.legend{position:absolute;left:9px;top:7px;display:flex;flex-direction:column;align-items:flex-start;color:#555;font-size:12px}
.title{display:flex;align-items:center;gap:4px;height:18px;font-size:15px;line-height:18px;margin-bottom:8px}
.title i{width:18px;height:18px;border-radius:9px;background:#0094c4;color:#fff;font:700 8px/18px "Noto Sans",sans-serif;text-align:center}
.title em{font-style:normal;color:#dbdbdb}
.title svg{margin-left:4px}
.legend span{display:block;height:16px;margin-bottom:8px}
.legend span+span{margin-bottom:6px}
.legend button{width:29px;height:21px;padding:0;border:1px solid #3a3a3a;border-radius:3px;background:#000;color:#dbdbdb;display:flex;align-items:center;justify-content:center}
.sub{position:absolute;left:9px;top:9px;color:#555;font-size:12px}
session-table{position:absolute;right:10px;top:10px}
.tv{position:absolute;left:9px;bottom:11px}
.s1{padding-top:58px;padding-bottom:11px}
.s2{padding-top:12px;padding-bottom:21px}
.s3{padding-top:12px;padding-bottom:12px}
.cur{position:absolute;left:3px;top:4px;height:26px}
select{display:block;width:60px;height:26px;box-sizing:border-box;border:1px solid #4a4a4a;border-radius:4px;color:#dbdbdb;font:11px "Noto Sans",sans-serif;appearance:none;padding:0 3px;background:#0f0f0f}
.car{position:absolute;right:-6px;top:-1px;color:#dbdbdb;pointer-events:none}
.tag{position:absolute;left:0;top:543px;width:62px;height:30px;box-sizing:border-box;padding:2px 0 0 8px;border-radius:0 2px 2px 0;background:#f77c00;color:#fff;font-size:11px;line-height:13px}
.tag small{display:block;font-size:11px;color:#fde0c0}
.cog{border-top:1px solid #4a4a4a;border-left:1px solid #4a4a4a;display:flex;align-items:center;justify-content:center}
.cog button{background:none;border:0;padding:0;color:#dbdbdb}
</style>
<price-plot class="p"><div class="legend"><div class="title"><i>100</i><div>NASDAQ 100 E-mini Futures <em>·</em> 1 <em>·</em> CME</div><svg width="12" height="12"><path d="M1 0h11l-4 6 4 6H1z" fill="#81c784"/></svg></div><span>XTFlow BE</span><span>EventFlow</span><button aria-label="Collapse"><tv-icon name="up"></tv-icon></button></div><session-table></session-table></price-plot>
<scale-column class="p s1" labels="${p.join(' ')}"><label class="cur"><select aria-label="Currency"><option>USD</option></select><tv-icon class="car" name="caret"></tv-icon></label><div class="tag">30,399.50<small>00:30</small></div></scale-column>
<flow-plot class="p"><div class="sub">XTFlow Master v6</div></flow-plot>
<scale-column class="p s2" labels="4,000.00 0.00 -4,000.00 -8,000.00"></scale-column>
<osc-plot><div class="sub">XTFlow Master v6</div><svg class="tv" width="36" height="20" viewBox="0 0 36 20"><path d="M2 2h13v15H9V9H2zM16 6a3 3 0 1 1 6 0 3 3 0 0 1-6 0zM26 2h8l-7 15h-8z" fill="#e0e0e0" stroke="#0f0f0f" stroke-width="3" paint-order="stroke"/></svg></osc-plot>
<scale-column class="s3" labels="80.00 40.00 0.00 -40.00 -80.00"></scale-column>
<time-axis></time-axis><div class="cog"><button aria-label="Axis settings"><svg width="16" height="16" viewBox="0 0 16 16" fill="none" stroke="currentColor"><path d="M5 2h6l4 6-4 6H5L1 8z" stroke-width="1.300"/><circle cx="8" cy="8" r="2"/></svg></button></div>`;
  }
}
customElements.define('chart-area',ChartArea);

class RangeBar extends HTMLElement{
  connectedCallback(){
    this.attachShadow({mode:'open'}).innerHTML=`<style>
:host{display:flex;align-items:center;height:39px;box-sizing:border-box;border-top:1px solid #2e2e2e;background:#0f0f0f;padding:0 10px 0 15px}
button{font:inherit;color:inherit;background:none;border:0;padding:0;height:28px;display:flex;align-items:center;white-space:nowrap}
.r{display:flex;gap:11px;margin-right:5px}
.e{margin-left:auto;display:flex;align-items:center}
.e button{margin-left:12px}
.e tv-divider{margin-left:8px}
.e tv-divider+button{margin-left:7px}
.go{margin-left:4px}
</style><div class="r">${['1D','5D','1M','3M','6M','YTD','1Y','5Y','All'].map(t=>`<button>${t}</button>`).join('')}</div><tv-divider></tv-divider><button class="go" aria-label="Go to"><tv-icon name="goto"></tv-icon></button><div class="e"><button>16:46:30 UTC+2</button><button>ETH</button><tv-divider></tv-divider><button>B-ADJ</button></div>`;
  }
}
customElements.define('range-bar',RangeBar);

class TradingApp extends HTMLElement{
  connectedCallback(){
    this.attachShadow({mode:'open'}).innerHTML=`<style>
:host{display:flex;flex-direction:column;gap:4px;height:100vh;background:#2e2e2e}
main{flex:1;min-height:0;display:flex;gap:4px}
.c{flex:1;min-width:0;display:flex;flex-direction:column}
chart-area{flex:1}
</style><top-bar></top-bar><main><draw-bar></draw-bar><div class="c"><chart-area></chart-area><range-bar></range-bar></div><side-bar></side-bar></main>`;
  }
}
customElements.define('trading-app',TradingApp);
</script>
</body>
</html>
